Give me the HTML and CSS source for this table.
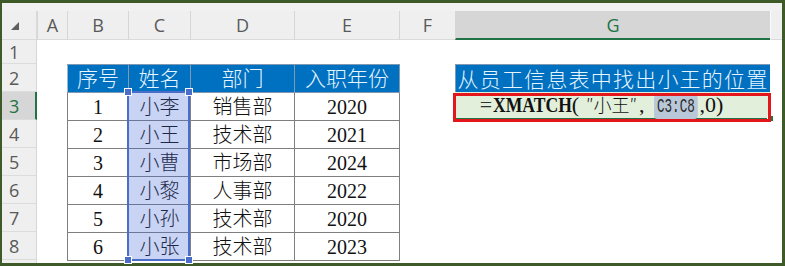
FILE: index.html
```html
<!DOCTYPE html>
<html lang="zh-CN">
<head>
    <meta charset="UTF-8">
    <title>XMATCH 查找位置</title>
    <link rel="stylesheet" href="styles.css">
</head>
<body>
    <div class="frame">
        <div class="sheet">
            <div class="strip"></div>

            <!-- column headers -->
            <div class="corner">
                <svg width="10" height="10" viewBox="0 0 10 10"><polygon points="9,1 9,9 1,9" fill="#5f5f5f"/></svg>
            </div>
            <div class="col-head">A</div>
            <div class="col-head">B</div>
            <div class="col-head">C</div>
            <div class="col-head">D</div>
            <div class="col-head">E</div>
            <div class="col-head">F</div>
            <div class="col-head active">G</div>
            <div class="col-head rest"></div>

            <!-- row headers -->
            <div class="row-head r1">1</div>
            <div class="row-head r2">2</div>
            <div class="row-head r3 active">3</div>
            <div class="row-head r4">4</div>
            <div class="row-head r5">5</div>
            <div class="row-head r6">6</div>
            <div class="row-head r7">7</div>
            <div class="row-head r8">8</div>
            <div class="row-head tail"></div>

            <!-- staff table B2:E8 -->
            <div class="tbl">
                <table>
                    <colgroup>
                        <col style="width:61px">
                        <col style="width:62px">
                        <col style="width:104px">
                        <col style="width:105px">
                    </colgroup>
                    <thead>
                        <tr><th>序号</th><th>姓名</th><th>部门</th><th>入职年份</th></tr>
                    </thead>
                    <tbody>
                        <tr><td>1</td><td>小李</td><td>销售部</td><td>2020</td></tr>
                        <tr><td>2</td><td>小王</td><td>技术部</td><td>2021</td></tr>
                        <tr><td>3</td><td>小曹</td><td>市场部</td><td>2024</td></tr>
                        <tr><td>4</td><td>小黎</td><td>人事部</td><td>2022</td></tr>
                        <tr><td>5</td><td>小孙</td><td>技术部</td><td>2020</td></tr>
                        <tr><td>6</td><td>小张</td><td>技术部</td><td>2023</td></tr>
                    </tbody>
                </table>
                <!-- C3:C8 range highlight -->
                <div class="range">
                    <span class="knob tl"></span>
                    <span class="knob tr"></span>
                    <span class="knob bl"></span>
                    <span class="knob br"></span>
                </div>
            </div>

            <div class="title-cell">从员工信息表中找出小王的位置</div>
            <div class="formula-cell">
                <span class="formula"><span class="eq">=</span><b class="fn">XMATCH</b>(<span class="cjk">″小王″</span>,<span class="ref">C3:C8</span>,0)</span>
                <span class="fill-handle"></span>
                <span class="mark"></span>
            </div>
        </div>
    </div>
</body>
</html>
```

FILE: styles.css
```css
body {
    margin: 0;
    background: #ffffff;
}

.frame {
    width: 785px;
    height: 266px;
    box-sizing: border-box;
    border: 3px solid #3d5a28;
    border-left-width: 2px;
    background: #ffffff;
}

.sheet {
    display: grid;
    grid-template-columns: 35px 30px 61px 62px 104px 105px 56px 315px 12px;
    grid-template-rows: 8px 29px 24px repeat(6, 28px) 28px 3px;
    font-family: "Open Sans", "Liberation Sans", sans-serif;
}

.strip {
    grid-column: 1 / -1;
    background: #f1f1f1;
}

/* header row */
.corner {
    background: #efefef;
    border-bottom: 1px solid #dadada;
    border-right: 1px solid #dadada;
    box-sizing: border-box;
    display: flex;
    align-items: flex-end;
    justify-content: flex-start;
    padding: 0 0 8px 8px;
}

.col-head {
    background: #efefef;
    border-left: 1px solid #d6d6d6;
    border-bottom: 1px solid #dadada;
    box-sizing: border-box;
    color: #595959;
    font-size: 18px;
    line-height: 28px;
    text-align: center;
}

.col-head.active {
    background: #d6d6d6;
    color: #217346;
    border-bottom: 2px solid #217346;
}

.col-head.rest {
    border-left: 1px solid #fafafa;
}

/* row header column */
.row-head {
    grid-column: 1;
    background: #efefef;
    border-right: 1px solid #d6d6d6;
    border-bottom: 1px solid #dcdcdc;
    box-sizing: border-box;
    color: #595959;
    font-size: 18px;
    padding-left: 7px;
    display: flex;
    align-items: center;
}

.row-head.active {
    background: #d6d6d6;
    color: #217346;
    border-right: 2px solid #217346;
}

.row-head.tail {
    border-bottom: none;
}

/* staff table */
.tbl {
    grid-column: 3 / 7;
    grid-row: 4 / 11;
    position: relative;
}

table {
    border-collapse: collapse;
    table-layout: fixed;
    width: 332px;
    font-family: "Liberation Serif", "Noto Sans CJK SC", serif;
    font-weight: 300;
}

th, td {
    height: 28px;
    padding: 0;
    box-sizing: border-box;
    text-align: center;
    border: 1px solid #7f7f7f;
}

th {
    background: #0070c0;
    color: #e6f5ff;
    font-size: 21px;
    font-weight: 300;
    border-color: #7f99b3;
    border-left-color: #9bb8d3;
    line-height: 26px;
}

td {
    font-size: 20px;
    color: #111111;
    line-height: 26px;
}

.range {
    position: absolute;
    left: 60px;
    top: 27px;
    width: 63px;
    height: 170px;
    box-sizing: border-box;
    border: 2px solid #4a6dc9;
    background: rgba(62, 96, 212, 0.28);
}

.knob {
    position: absolute;
    width: 6px;
    height: 6px;
    background: #4a6dc9;
    border: 1px solid #ffffff;
}

.knob.tl { left: -5px; top: -5px; }
.knob.tr { right: -5px; top: -5px; }
.knob.bl { left: -5px; bottom: -5px; }
.knob.br { right: -5px; bottom: -5px; }

/* G2 / G3 */
.title-cell {
    grid-column: 8;
    grid-row: 4;
    background: #0070c0;
    color: #e6f5ff;
    font-family: "Noto Sans CJK SC", sans-serif;
    font-weight: 300;
    font-size: 21px;
    letter-spacing: 1.2px;
    line-height: 27px;
    text-align: center;
    white-space: nowrap;
    border-left: 1px solid #7f99b3;
    border-top: 1px solid #7f99b3;
    box-sizing: border-box;
}

.formula-cell {
    grid-column: 8;
    grid-row: 5;
    position: relative;
    background: #e2efda;
    display: flex;
    align-items: center;
    justify-content: center;
    padding-right: 22px;
    box-sizing: border-box;
    border-bottom: 2px solid #217346;
}

.formula {
    font-family: "Liberation Serif", "Noto Sans CJK SC", serif;
    font-size: 22px;
    line-height: 26px;
    color: #111111;
    white-space: nowrap;
}

/* narrow, tall function name like the sheet's own font */
.formula .fn {
    display: inline-block;
    transform: scaleX(0.8);
    transform-origin: left center;
    margin-right: -20px;
}

.formula .eq {
    color: #333333;
    margin-right: 1px;
}

.formula .cjk {
    font-family: "Noto Sans CJK SC", sans-serif;
    font-weight: 300;
    font-size: 18px;
    margin: 0 2px 0 7px;
}

/* range reference, squeezed to half-width letters */
.formula .ref {
    display: inline-block;
    background: #b9c8d8;
    border-radius: 6px / 4px;
    padding: 0 5px;
    margin: 0 -28px 0 10px;
    font-family: "Liberation Mono", monospace;
    font-size: 21px;
    line-height: 24px;
    color: #2a2a2a;
    transform: scaleX(0.6);
    transform-origin: left center;
}

.fill-handle {
    position: absolute;
    right: -4px;
    bottom: -4px;
    width: 5px;
    height: 5px;
    background: #217346;
    border: 1px solid #ffffff;
}

/* red note box round the formula */
.mark {
    position: absolute;
    left: -2px;
    right: -1px;
    top: 1px;
    bottom: -4px;
    border: 3px solid #e3161c;
}
```
